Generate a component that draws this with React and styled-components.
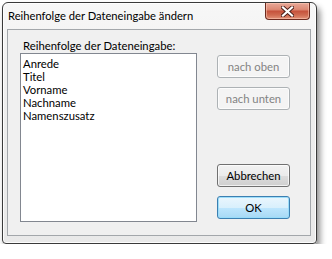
import React from "react";
import styled, { createGlobalStyle } from "styled-components";

const GlobalStyle = createGlobalStyle`
  html, body {
    margin: 0;
    padding: 0;
    background: #ffffff;
  }
  body {
    font-family: Lato, "Open Sans", sans-serif;
    font-size: 11.3px;
    color: #000;
  }
`

const Page = styled.div`
  padding: 2px 0 0 2px;
`

const Window = styled.div`
  box-sizing: border-box;
  width: 315px;
  height: 242px;
  border: 1px solid #3a3a3a;
  border-radius: 6px 6px 4px 4px;
  background: linear-gradient(180deg, #f7f7f7 0%, #eeeeee 40%, #e9e9e9 100%);
  box-shadow: inset 0 0 0 1px rgba(255, 255, 255, 0.85), 3px 5px 6px rgba(0, 0, 0, 0.45);
  display: flex;
  flex-direction: column;
  padding: 0 5px 7px 4px;
`

const TitleBar = styled.div`
  height: 26px;
  display: flex;
  align-items: flex-start;
  justify-content: space-between;
`

const Title = styled.div`
  padding: 5px 0 0 1px;
  font-size: 11.2px;
  line-height: 16px;
  color: #000;
`

const CloseButton = styled.div`
  width: 43px;
  height: 16px;
  margin-right: 1px;
  border: 1px solid #6b2a1f;
  border-top: none;
  border-radius: 0 0 4px 4px;
  background: linear-gradient(180deg, #e8a898 0%, #dd8a75 40%, #c6533d 52%, #cf6a50 75%, #e2927a 100%);
  box-shadow: inset 0 0 0 1px rgba(255, 210, 190, 0.5);
  display: flex;
  align-items: center;
  justify-content: center;
`

const Client = styled.div`
  flex: 1;
  border: 1px solid #a3a7ab;
  background: #f0f0f0;
  display: flex;
  gap: 20px;
  padding: 8px 0 0 12px;
`

const LeftColumn = styled.div`
  display: flex;
  flex-direction: column;
`

const Label = styled.div`
  line-height: 15px;
  padding-left: 3px;
`

const ListBox = styled.div`
  width: 175px;
  height: 164px;
  border: 1px solid #828790;
  background: #fff;
  padding-top: 3px;
`

const ListItem = styled.div`
  line-height: 13px;
  padding-left: 2px;
`

const RightColumn = styled.div`
  display: flex;
  flex-direction: column;
  justify-content: space-between;
  padding-top: 17px;
  height: 164px;
`

const ButtonGroup = styled.div`
  display: flex;
  flex-direction: column;
  gap: 9px;
`

const Button = styled.button`
  width: 73px;
  height: 23px;
  padding: 0;
  font-family: inherit;
  font-size: 11.3px;
  border-radius: 3px;
  border: 1px solid ${p => (p.disabled ? "#adb2b5" : p.$primary ? "#3c7fb1" : "#707070")};
  color: ${p => (p.disabled ? "#838383" : "#000")};
  background: ${p =>
    p.disabled
      ? "#f4f4f4"
      : p.$primary
      ? "linear-gradient(180deg, #eaf6fd 0%, #d9f0fc 50%, #bee6fd 51%, #a7d9f5 100%)"
      : "linear-gradient(180deg, #f2f2f2 0%, #ebebeb 50%, #dddddd 51%, #cfcfcf 100%)"};
  box-shadow: inset 0 0 0 1px ${p => (p.$primary ? "rgba(150, 220, 250, 0.9)" : "rgba(255, 255, 255, 0.7)")};
`

const items = ["Anrede", "Titel", "Vorname", "Nachname", "Namenszusatz"]

const App = () => {
  return (
    <Page>
      <GlobalStyle />
      <Window>
        <TitleBar>
          <Title>Reihenfolge der Dateneingabe ändern</Title>
          <CloseButton>
            <svg width="13" height="11" viewBox="0 0 13 11">
              <path d="M2 1.5 L11 9.5 M11 1.5 L2 9.5" stroke="#4a1e18" strokeWidth="4" strokeLinecap="square" />
              <path d="M2 1.5 L11 9.5 M11 1.5 L2 9.5" stroke="#ffffff" strokeWidth="2.2" strokeLinecap="square" />
            </svg>
          </CloseButton>
        </TitleBar>
        <Client>
          <LeftColumn>
            <Label>Reihenfolge der Dateneingabe:</Label>
            <ListBox>
              {items.map(item => (
                <ListItem key={item}>{item}</ListItem>
              ))}
            </ListBox>
          </LeftColumn>
          <RightColumn>
            <ButtonGroup>
              <Button disabled>nach oben</Button>
              <Button disabled>nach unten</Button>
            </ButtonGroup>
            <ButtonGroup>
              <Button>Abbrechen</Button>
              <Button $primary>OK</Button>
            </ButtonGroup>
          </RightColumn>
        </Client>
      </Window>
    </Page>
  )
}

export default App
